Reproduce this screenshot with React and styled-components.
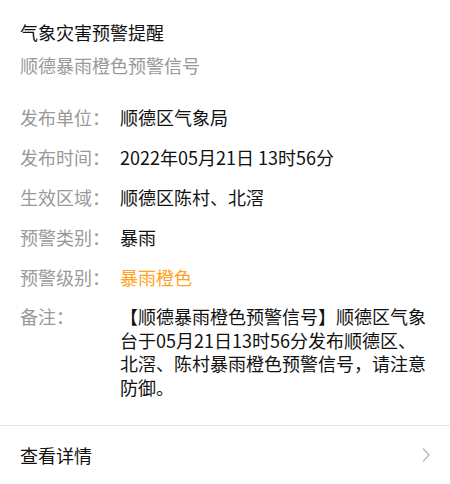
import styled, { createGlobalStyle } from "styled-components";

const GlobalStyle = createGlobalStyle`
  html, body {
    margin: 0;
    padding: 0;
    background: #fff;
  }
  body {
    font-family: "Noto Sans CJK SC", "Noto Sans", sans-serif;
    color: #111;
  }
`;

const rows = [
  { label: "发布单位：", value: "顺德区气象局" },
  { label: "发布时间：", value: "2022年05月21日 13时56分" },
  { label: "生效区域：", value: "顺德区陈村、北滘" },
  { label: "预警类别：", value: "暴雨" },
  { label: "预警级别：", value: "暴雨橙色", accent: true },
];

const Card = styled.section`
  width: 450px;
  height: 484px;
  display: flex;
  flex-direction: column;
  background: #fff;
  overflow: hidden;
`;

const Header = styled.header`
  padding: 20px 20px 0;
  display: flex;
  flex-direction: column;
  gap: 9px;
`;

const Title = styled.h1`
  margin: 0;
  font-size: 18px;
  font-weight: normal;
  line-height: 24px;
  color: #111;
`;

const Subtitle = styled.h2`
  margin: 0;
  font-size: 18px;
  font-weight: normal;
  line-height: 24px;
  color: #999;
`;

const Info = styled.dl`
  margin: 20px 0 0;
  padding: 0 20px 18px 20px;
  border-bottom: 1px solid #e6e6e6;
`;

const Row = styled.div`
  display: grid;
  grid-template-columns: 100px 1fr;
  padding: 8px 0;
  font-size: 18px;
  line-height: ${({ $multi }) => ($multi ? "23.5px" : "24px")};
`;

const Label = styled.dt`
  margin: 0;
  color: #999;
  white-space: nowrap;
`;

const Value = styled.dd`
  margin: 0;
  padding-right: 2px;
  color: ${({ $accent }) => ($accent ? "#ffa31a" : "#111")};
`;

const Footer = styled.a`
  flex: 1;
  display: flex;
  align-items: center;
  justify-content: space-between;
  padding: 0 19px 0 20px;
  font-size: 18px;
  color: #111;
  text-decoration: none;
  cursor: pointer;
`;

const Chevron = () => (
  <svg width="10" height="16" viewBox="0 0 10 16" fill="none">
    <path d="M2 1.5 L8 8 L2 14.5" stroke="#bcbcbc" strokeWidth="1.5" />
  </svg>
);

export default function App() {
  return (
    <Card>
      <GlobalStyle />
      <Header>
        <Title>气象灾害预警提醒</Title>
        <Subtitle>顺德暴雨橙色预警信号</Subtitle>
      </Header>
      <Info>
        {rows.map((r) => (
          <Row key={r.label}>
            <Label>{r.label}</Label>
            <Value $accent={r.accent}>{r.value}</Value>
          </Row>
        ))}
        <Row $multi>
          <Label>备注：</Label>
          <Value>
            【顺德暴雨橙色预警信号】顺德区气象台于05月21日13时56分发布顺德区、北滘、陈村暴雨橙色预警信号，请注意防御。
          </Value>
        </Row>
      </Info>
      <Footer>
        <span>查看详情</span>
        <Chevron />
      </Footer>
    </Card>
  );
}
